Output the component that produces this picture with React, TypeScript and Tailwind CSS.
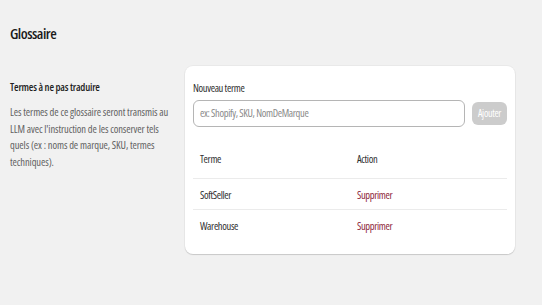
export default function App() {
  const rows = ["SoftSeller", "Warehouse"];
  return (
    <div className="min-h-[305px] w-full bg-[#f1f1f1] font-['Open_Sans',sans-serif] text-[#303030] font-stretch-condensed">
      <div className="px-[10px] pt-[23px] pb-[23px]">
        <h1 className="text-[15px] leading-[20px] font-semibold tracking-[-0.5px] text-[#1a1a1a]">Glossaire</h1>
      </div>
      <div className="flex">
        <div className="w-[185px] shrink-0 pt-[13px] pr-[16px] pl-[10px]">
          <h2 className="text-[10.5px] leading-[16px] font-semibold tracking-[-0.2px] text-[#1f1f1f]">Termes à ne pas traduire</h2>
          <p className="mt-[9px] text-[10.5px] leading-[16.7px] tracking-[-0.1px] text-[#616161]">
            Les termes de ce glossaire seront transmis au LLM avec l'instruction de les conserver tels quels (ex : noms de marque, SKU, termes techniques).
          </p>
        </div>
        <div className="w-[330px] rounded-[8px] bg-white px-[8px] pt-[15px] pb-[13px] shadow-[0_1px_1px_rgba(0,0,0,0.14),0_0_0_1px_rgba(0,0,0,0.03)]">
          <label className="block text-[10.5px] leading-[15px] tracking-[-0.35px] text-[#303030]">Nouveau terme</label>
          <div className="mt-[4px] flex items-center gap-[7px]">
            <div className="flex h-[27px] flex-1 items-center rounded-[6px] border border-[#b5b5b5] px-[6px] text-[10.5px] tracking-[-0.35px] text-[#8a8a8a]">
              ex: Shopify, SKU, NomDeMarque
            </div>
            <button className="h-[23px] w-[35px] rounded-[6px] bg-[#cccccc] text-[10px] tracking-[-0.3px] text-white">Ajouter</button>
          </div>
          <div className="mt-[14px] text-[10.5px] tracking-[-0.35px]">
            <div className="flex h-[38px] items-center border-b border-[#ebebeb] text-[#303030]">
              <div className="flex-1 px-[7px]">Terme</div>
              <div className="flex-1 px-[7px]">Action</div>
            </div>
            {rows.map((r, i) => (
              <div
                key={r}
                className={i === 0 ? "flex h-[31px] items-center border-b border-[#ebebeb] pt-[3px]" : "flex h-[31px] items-center pt-[3px]"}
              >
                <div className="flex-1 px-[7px] text-[#303030]">{r}</div>
                <div className="flex-1 px-[7px] text-[#8e1f3b]">Supprimer</div>
              </div>
            ))}
          </div>
        </div>
      </div>
    </div>
  );
}
